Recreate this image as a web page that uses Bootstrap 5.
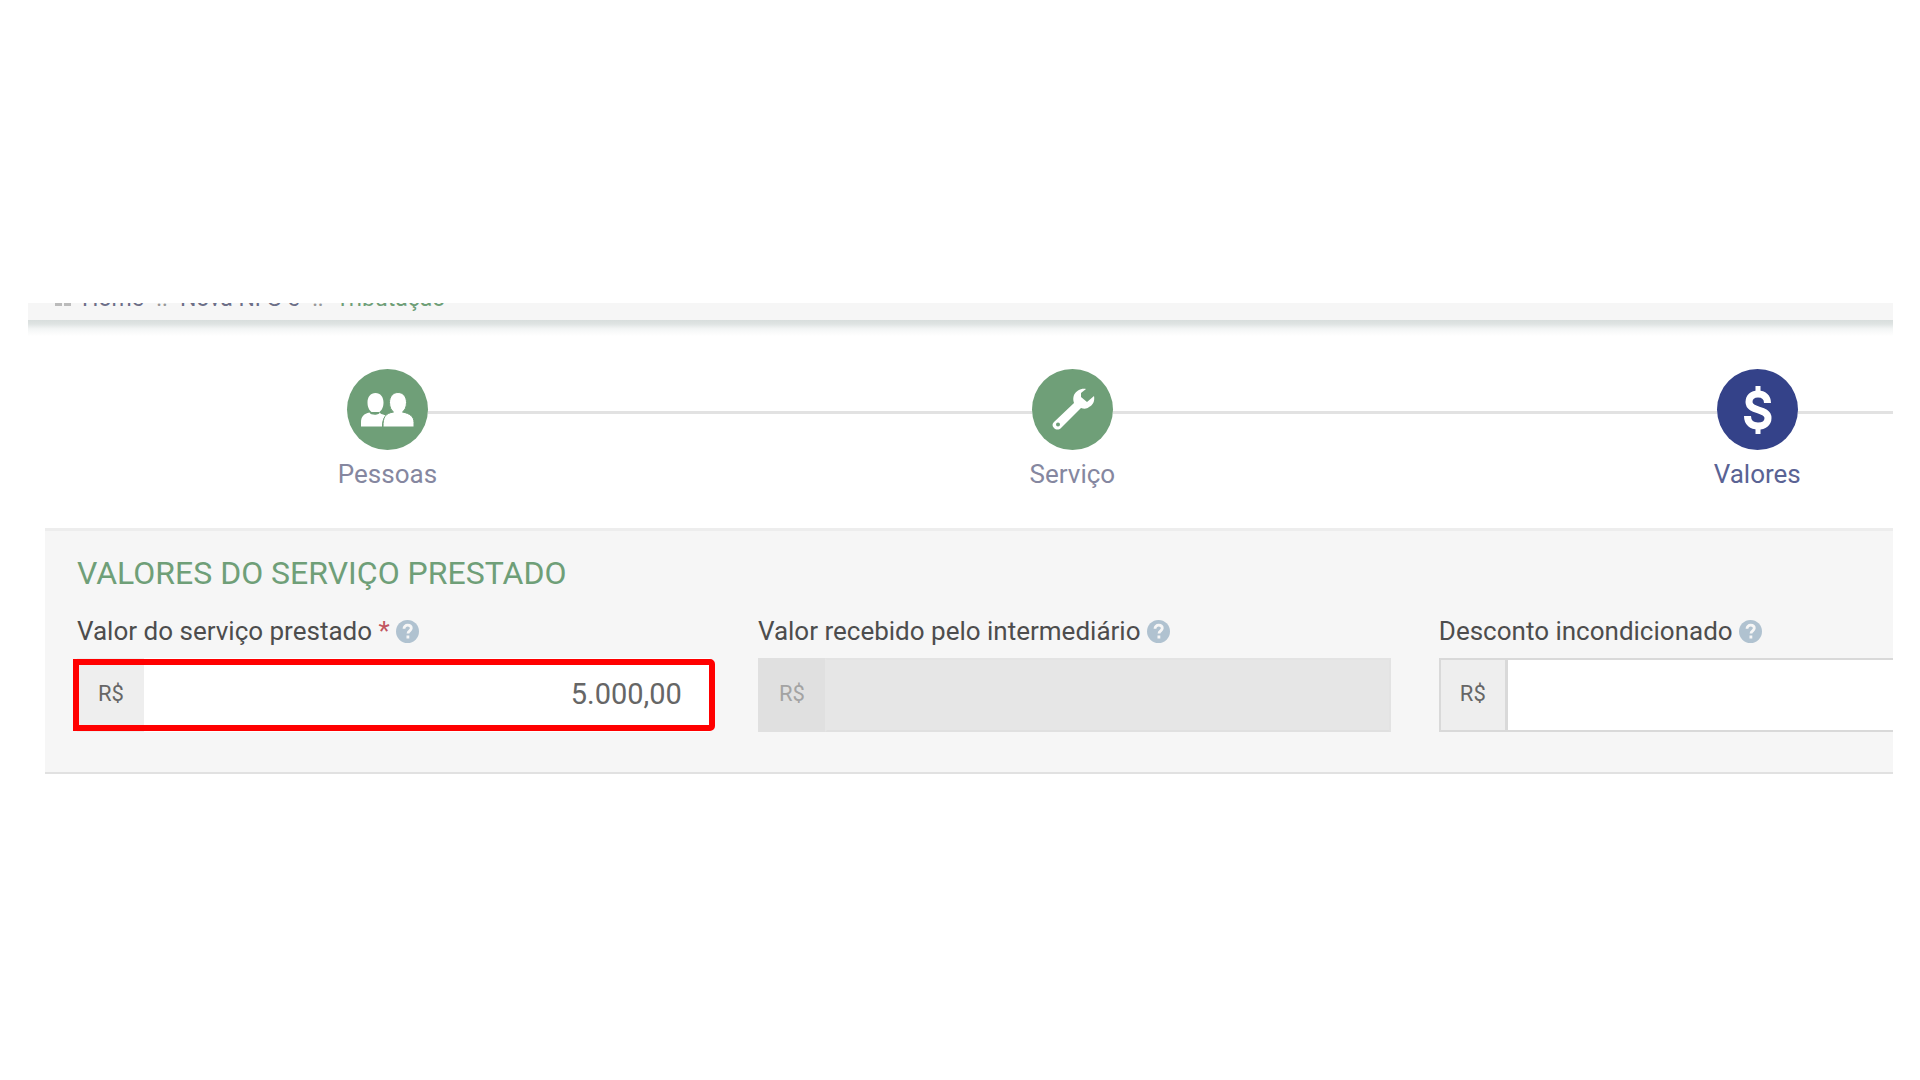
<!DOCTYPE html>
<html lang="pt-BR">
<head>
<meta charset="utf-8">
<meta name="viewport" content="width=device-width, initial-scale=1">
<title>Nova NFS-e - Tributação</title>
<link href="https://cdn.jsdelivr.net/npm/bootstrap@5.3.0/dist/css/bootstrap.min.css" rel="stylesheet">
<style>
  body { font-family: Roboto, "Liberation Sans", sans-serif; background: #fff; color: #555; }
  .page { padding: 0 27px 0 28px; }
  .frame { min-height: 474px; }

  /* breadcrumb strip, scrolled so only its lower edge shows */
  .crumb-bar { height: 17px; background: #f6f6f6; }
  .crumb-bar ol { font-size: 23px; line-height: 28px; padding: 0 0 7px 26px; margin: 0; }
  .crumb-bar a { color: #6d6f88; text-decoration: none; }
  .crumb-bar .here { color: #6f9f78; }
  .crumb-bar .sep { color: #999; width: 36px; text-align: center; }
  .crumb-bar svg { fill: #bbb; margin: 0 10px 4px 0; }
  .bar-shadow { height: 16px; background: linear-gradient(#d8dedd 0, #dfe4e3 25%, #f3f5f5 55%, #fff 100%); }

  .wide { width: 148.25%; }
  .content { padding-left: 17px; }
  .steps { padding-top: 33px; margin-bottom: 38px; }
  .step-line { height: 3px; background: #e2e2e2; margin-top: 5px; }
  li:first-child > div > .step-line:first-child { visibility: hidden; }
  .step-dot { width: 81px; height: 81px; background: #6f9f78; color: #fff; border-radius: 50%; flex: none; }
  .step-name { font-size: 26px; line-height: 32px; margin-top: 8px; color: #8587a0; }
  .now .step-dot { background: #344289; }
  .now .step-name { color: #5a6394; }

  .panel { background: #f6f6f6; border-top: 3px solid #ededed; border-bottom: 2px solid #e1e1e1; padding: 24px 32px 40px; }
  .panel h2 { font-size: 32px; line-height: 36px; color: #6f9f78; margin-bottom: 24px; }
  .field-label { font-size: 26px; line-height: 32px; margin-bottom: 11px; color: #4d4d4d; gap: 6px; }
  .req { color: #c25560; }
  .money { height: 74px; }
  .money .input-group-text { width: 68px; font-size: 22px; padding: 0 0 4px; justify-content: center; background: #eee; color: #666; border: 2px solid #d9d9d9; border-radius: 0; }
  .money .form-control { font-size: 29px; padding: 0 26px; text-align: right; color: #666; background: #fff; border: 2px solid #d9d9d9; border-radius: 0; }
  .money.off .input-group-text { background: #e0e0e0; color: #a3a3a3; border-color: #e0e0e0; }
  .money.off .form-control { background: #e6e6e6; border-color: #e3e3e3 #e3e3e3 #e0e0e0 #e6e6e6; }
  .money.hot .input-group-text, .money.hot .form-control { border-color: transparent; }
  .hot-ring { position: absolute; inset: 1px -5px 1px -3px; border: 6px solid #f00; border-radius: 5px; pointer-events: none; z-index: 6; }
</style>
</head>
<body>
<main class="page min-vh-100 d-flex align-items-center">
  <div class="frame w-100 overflow-hidden">
    <nav class="crumb-bar d-flex align-items-end overflow-hidden" aria-label="Navegação">
      <ol class="list-unstyled d-flex align-items-center">
        <li><a href="#" class="d-flex align-items-center"><svg width="18" height="18" viewBox="0 0 18 18" aria-hidden="true"><path d="M9 0 0 8h1v10h7v-6h2v6h7V8h1z"/></svg>Home</a></li>
        <li class="sep">::</li>
        <li><a href="#">Nova NFS-e</a></li>
        <li class="sep">::</li>
        <li class="here">Tributação</li>
      </ol>
    </nav>
    <div class="bar-shadow"></div>

    <div class="content">
      <div class="wide">
        <ol class="steps list-unstyled row row-cols-4 g-0">
          <li class="text-center">
            <div class="d-flex align-items-center">
              <span class="step-line flex-fill"></span>
              <span class="step-dot d-flex align-items-center justify-content-center">
                <svg width="81" height="81" viewBox="0 0 81 81" fill="#fff" aria-hidden="true">
                  <path d="M28.500 24c5 0 8 4 8 9.500 0 5-2 8-4 9.500 1 2.500 4 2.500 7 3.500-3 2-4.500 5-4.500 11H14v-4c0-6 3-9 8.500-10 .8 3 11 3 10-.500h-8c-2-1.500-4-4.500-4-9.500 0-5.500 3-9.500 8-9.500z"/>
                  <path stroke="#6f9f78" stroke-width="1" d="M51 23.500c5 0 8.500 4 8.500 10 0 5-2 8-4 9.500 7.500 1.500 11.500 4.500 11.500 10.500V58H36c0-10 2-13.500 10.500-15-2-1.500-4-4.500-4-9.500 0-6 3.500-10 8.500-10z"/>
                </svg>
              </span>
              <span class="step-line flex-fill"></span>
            </div>
            <div class="step-name">Pessoas</div>
          </li>
          <li class="text-center">
            <div class="d-flex align-items-center">
              <span class="step-line flex-fill"></span>
              <span class="step-dot d-flex align-items-center justify-content-center">
                <svg width="81" height="81" viewBox="0 0 81 81" fill="#fff" aria-hidden="true">
                  <path fill-rule="evenodd" d="M54 20c-5-1-10 2-12 6-1 3-1 5 0 8L22 53c-2 2-2 4 0 6s5 2 7 0l20-20c3 1 6 1 8-1 4-2 6-6 5-11l-7 6-6-5v-4zM26 53.500a2 2 0 1 1 0 4 2 2 0 0 1 0-4z"/>
                </svg>
              </span>
              <span class="step-line flex-fill"></span>
            </div>
            <div class="step-name">Serviço</div>
          </li>
          <li class="text-center now">
            <div class="d-flex align-items-center">
              <span class="step-line flex-fill"></span>
              <span class="step-dot d-flex align-items-center justify-content-center">
                <svg width="81" height="81" viewBox="0 0 81 81" fill="none" stroke="#fff" aria-hidden="true">
                  <path stroke-width="5" d="M41 17v9M41 56v9"/>
                  <path stroke-width="7" d="M50.500 34c0-6-4-9-9.500-9s-9 3-9 8c0 10 19 6 19 16 0 5-4 8-10 8s-10.500-3-10.500-10"/>
                </svg>
              </span>
              <span class="step-line flex-fill"></span>
            </div>
            <div class="step-name">Valores</div>
          </li>
        </ol>

        <section class="panel">
          <h2 class="fw-normal text-uppercase">Valores do serviço prestado</h2>
          <div class="row row-cols-4 gx-5">
            <div>
              <label class="field-label d-flex align-items-center" for="valor">
                <span>Valor do serviço prestado <span class="req">*</span></span>
                <svg width="23" height="23" viewBox="0 0 23 23" aria-hidden="true"><circle cx="11.500" cy="11.500" r="11.500" fill="#b0c2d0"/><path d="M8 8.800c0-2.200 1.500-3.600 3.700-3.600 2.100 0 3.600 1.200 3.600 3.100 0 2.500-3.300 2.500-3.300 5.200M11.900 15.400v3" fill="none" stroke="#f6f6f6" stroke-width="2.800"/></svg>
              </label>
              <div class="input-group money hot">
                <span class="input-group-text">R$</span>
                <input class="form-control" id="valor" type="text" value="5.000,00">
                <span class="hot-ring"></span>
              </div>
            </div>
            <div>
              <label class="field-label d-flex align-items-center" for="recebido">
                <span>Valor recebido pelo intermediário</span>
                <svg width="23" height="23" viewBox="0 0 23 23" aria-hidden="true"><circle cx="11.500" cy="11.500" r="11.500" fill="#b0c2d0"/><path d="M8 8.800c0-2.200 1.500-3.600 3.700-3.600 2.100 0 3.600 1.200 3.600 3.100 0 2.500-3.300 2.500-3.300 5.200M11.900 15.400v3" fill="none" stroke="#f6f6f6" stroke-width="2.800"/></svg>
              </label>
              <div class="input-group money off">
                <span class="input-group-text">R$</span>
                <input class="form-control" id="recebido" type="text" disabled>
              </div>
            </div>
            <div>
              <label class="field-label d-flex align-items-center" for="desconto">
                <span>Desconto incondicionado</span>
                <svg width="23" height="23" viewBox="0 0 23 23" aria-hidden="true"><circle cx="11.500" cy="11.500" r="11.500" fill="#b0c2d0"/><path d="M8 8.800c0-2.200 1.500-3.600 3.700-3.600 2.100 0 3.600 1.200 3.600 3.100 0 2.500-3.300 2.500-3.300 5.200M11.900 15.400v3" fill="none" stroke="#f6f6f6" stroke-width="2.800"/></svg>
              </label>
              <div class="input-group money">
                <span class="input-group-text">R$</span>
                <input class="form-control" id="desconto" type="text">
              </div>
            </div>
          </div>
        </section>
      </div>
    </div>
  </div>
</main>
<script src="https://cdn.jsdelivr.net/npm/bootstrap@5.3.0/dist/js/bootstrap.bundle.min.js"></script>
</body>
</html>
